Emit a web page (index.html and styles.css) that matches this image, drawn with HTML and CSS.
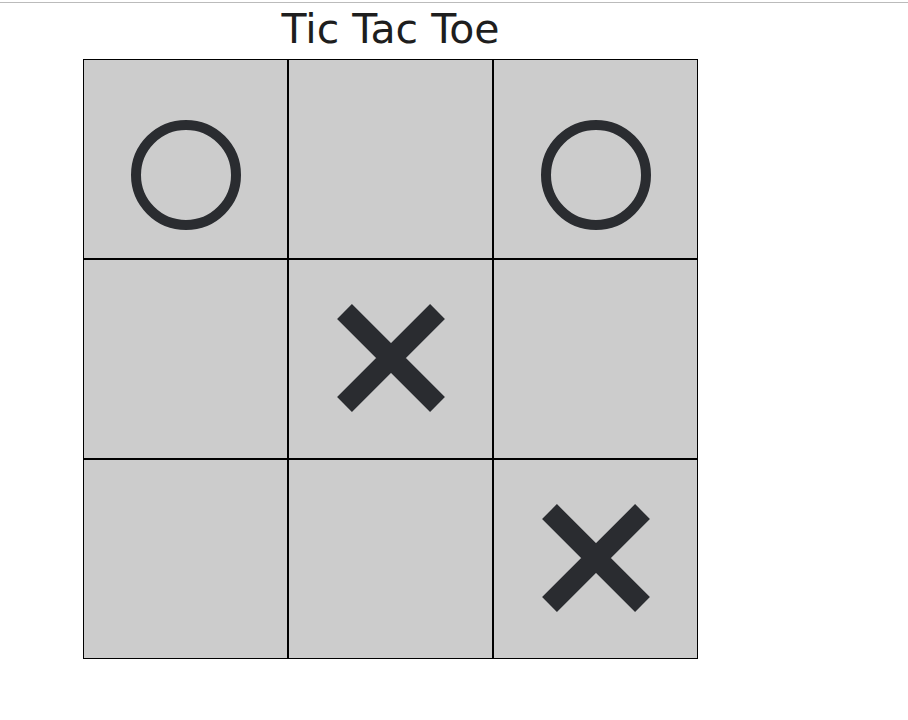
FILE: index.html
```html
<!DOCTYPE html>
<html lang="en">
<head>
    <meta charset="UTF-8">
    <meta name="viewport" content="width=device-width, initial-scale=1.0">
    <title>Tic Tac Toe</title>
    <link rel="stylesheet" href="styles.css">
</head>
<body>
    <div class="topline"></div>
    <div class="game">
        <div class="title">Tic Tac Toe</div>
        <div class="board">
            <div class="cell">
                <svg class="mark mark-o" viewBox="0 0 110 110" width="110" height="110"><circle cx="55" cy="55" r="50" /></svg>
            </div>
            <div class="cell"></div>
            <div class="cell">
                <svg class="mark mark-o" viewBox="0 0 110 110" width="110" height="110"><circle cx="55" cy="55" r="50" /></svg>
            </div>
            <div class="cell"></div>
            <div class="cell">
                <svg class="mark mark-x" viewBox="0 0 108 108" width="108" height="108"><path d="M7.5 7.5 L100.5 100.5 M100.5 7.5 L7.5 100.5" /></svg>
            </div>
            <div class="cell"></div>
            <div class="cell"></div>
            <div class="cell"></div>
            <div class="cell">
                <svg class="mark mark-x" viewBox="0 0 108 108" width="108" height="108"><path d="M7.5 7.5 L100.5 100.5 M100.5 7.5 L7.5 100.5" /></svg>
            </div>
        </div>
    </div>
</body>
</html>
```

FILE: styles.css
```css
body {
    margin: 0;
    padding: 0;
    background-color: #FFFFFF;
    font-family: 'DejaVu Sans', sans-serif;
    color: #222;
}
.topline {
    height: 2px;
    border-bottom: 1px solid #BBBBBB;
}
.game {
    width: 615px;
    margin-left: 83px;
}
.title {
    height: 56px;
    font-size: 41px;
    line-height: 52px;
    text-align: center;
    color: #1E1E1E;
}
.board {
    display: grid;
    grid-template-columns: repeat(3, 205px);
    grid-template-rows: repeat(3, 200px);
}
.cell {
    box-sizing: border-box;
    border: 1px solid #000;
    background-color: #CCCCCC;
    display: flex;
    justify-content: center;
    align-items: center;
}
.mark-o {
    margin-top: 32px;
    fill: none;
    stroke: #2A2C30;
    stroke-width: 10;
}
.mark-x {
    margin-bottom: 3px;
    fill: none;
    stroke: #2A2C30;
    stroke-width: 21;
    stroke-linecap: butt;
}
```
